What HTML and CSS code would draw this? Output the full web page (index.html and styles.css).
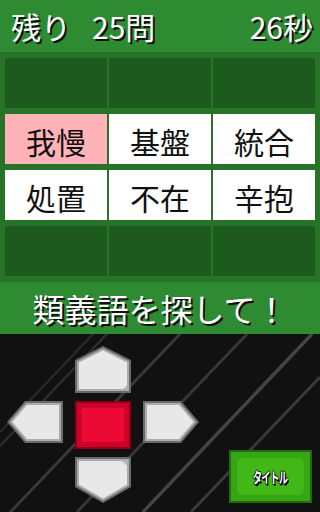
FILE: index.html
```html
<!DOCTYPE html>
<html lang="ja">
<head>
<meta charset="utf-8">
<title>類義語</title>
<link rel="stylesheet" href="styles.css">
</head>
<body>
<div class="app">
  <header class="status">
    <span class="status-label">残り</span>
    <span class="status-count">25問</span>
    <span class="status-time">26秒</span>
  </header>

  <section class="board">
    <div class="cell empty"></div>
    <div class="cell empty"></div>
    <div class="cell empty"></div>
    <div class="cell word selected">我慢</div>
    <div class="cell word">基盤</div>
    <div class="cell word">統合</div>
    <div class="cell word">処置</div>
    <div class="cell word">不在</div>
    <div class="cell word">辛抱</div>
    <div class="cell empty"></div>
    <div class="cell empty"></div>
    <div class="cell empty"></div>
  </section>

  <div class="message">類義語を探して！</div>

  <section class="controls">
    <svg class="stripes" width="320" height="178" viewBox="0 0 320 178" aria-hidden="true">
      <line x1="93" y1="0" x2="0" y2="98" stroke="#282828" stroke-width="2.5"/>
      <line x1="107" y1="0" x2="0" y2="112" stroke="#2e2e2e" stroke-width="2.5"/>
      <line x1="180" y1="0" x2="0" y2="189" stroke="#383838" stroke-width="3"/>
      <line x1="247" y1="0" x2="77" y2="178" stroke="#363636" stroke-width="3"/>
      <line x1="312" y1="0" x2="143" y2="178" stroke="#444444" stroke-width="3.5"/>
      <line x1="320" y1="43" x2="191" y2="178" stroke="#393939" stroke-width="3"/>
    </svg>

    <div class="dpad">
      <div class="pad-blank"></div>
      <svg class="pad pad-up" width="56" height="47" viewBox="0 0 56 47">
        <polygon points="28,0 56,14 56,47 0,47 0,14" fill="#6a6a6a"/>
        <polygon points="28,2.3 54,15.2 54,45 2,45 2,15.2" fill="#acacac"/>
        <polygon points="28,4.6 52,16.4 52,43 4,43 4,16.4" fill="#e8e8e8"/>
        <polygon points="48,43 52,39 52,43" fill="#bdbdbd"/>
      </svg>
      <div class="pad-blank"></div>

      <svg class="pad pad-left" width="56" height="42" viewBox="0 0 56 42">
        <polygon points="0,21 18,0 56,0 56,42 18,42" fill="#6a6a6a"/>
        <polygon points="2.7,21 19,2 54,2 54,40 19,40" fill="#acacac"/>
        <polygon points="5.4,21 20,4 52,4 52,38 20,38" fill="#e8e8e8"/>
      </svg>
      <div class="pad-center"></div>
      <svg class="pad pad-right" width="56" height="42" viewBox="0 0 56 42">
        <polygon points="0,0 38,0 56,21 38,42 0,42" fill="#6a6a6a"/>
        <polygon points="2,2 37,2 53.3,21 37,40 2,40" fill="#acacac"/>
        <polygon points="4,4 36,4 50.6,21 36,38 4,38" fill="#e8e8e8"/>
      </svg>

      <div class="pad-blank"></div>
      <svg class="pad pad-down" width="56" height="46" viewBox="0 0 56 46">
        <polygon points="0,0 56,0 56,30 28,46 0,30" fill="#6a6a6a"/>
        <polygon points="2,2 54,2 54,28.8 28,43.7 2,28.8" fill="#acacac"/>
        <polygon points="4,4 52,4 52,27.6 28,41.4 4,27.6" fill="#e8e8e8"/>
        <polygon points="47,4 52,4 52,9" fill="#bdbdbd"/>
      </svg>
      <div class="pad-blank"></div>
    </div>

    <div class="title-btn"><span class="title-text">タイトル</span></div>
  </section>
</div>
</body>
</html>
```

FILE: styles.css
```css
html, body {
  margin: 0;
  padding: 0;
  background: #111111;
}

.app {
  width: 320px;
  height: 512px;
  overflow: hidden;
  display: flex;
  flex-direction: column;
  font-family: "Noto Sans CJK JP", "Noto Sans", sans-serif;
}

.status {
  height: 52px;
  flex: none;
  display: flex;
  align-items: center;
  padding: 0 7px 0 11px;
  background: #2f8b31;
  color: #ffffff;
  font-size: 30px;
  line-height: 1;
  text-shadow: 2px 2px 0 #111111;
}

.status-count {
  margin-left: 21px;
}

.status-time {
  margin-left: auto;
}

.board {
  flex: none;
  height: 218px;
  padding: 6px 5px;
  background: #277428;
  display: grid;
  grid-template-columns: repeat(3, 102px);
  grid-template-rows: repeat(4, 50px);
  column-gap: 2px;
  row-gap: 6px;
}

.cell {
  display: flex;
  align-items: center;
  justify-content: center;
}

.cell.empty {
  background: #1c5b1d;
}

.cell.word {
  background: #ffffff;
  color: #111111;
  font-size: 30px;
  line-height: 1;
  padding-top: 4px;
  box-sizing: border-box;
}

.cell.word.selected {
  background: #ffb3b8;
}

.message {
  flex: none;
  height: 52px;
  background: #2f8b31;
  color: #ffffff;
  font-size: 32px;
  line-height: 52px;
  text-align: center;
  text-shadow: 2px 2px 0 #111111;
}

.controls {
  position: relative;
  flex: 1;
  background: #111111;
  display: flex;
  justify-content: space-between;
  padding: 12px 8px 19px 7px;
}

.stripes {
  position: absolute;
  left: 0;
  top: 0;
}

.dpad {
  position: relative;
  display: grid;
  grid-template-columns: 56px 56px 56px;
  grid-template-rows: 47px 48px 46px;
  column-gap: 12px;
  row-gap: 8px;
  align-self: flex-start;
}

.pad {
  display: block;
}

.pad-left,
.pad-right {
  align-self: start;
}

.pad-center {
  width: 56px;
  height: 48px;
  background: #ec0a34;
  box-shadow: inset 0 0 0 2px #8e0016, inset 0 0 0 7px #cf0029;
}

.title-btn {
  position: relative;
  align-self: flex-end;
  width: 83px;
  height: 53px;
  box-sizing: border-box;
  border: 2px solid #1f6b0e;
  background: #37a612;
  display: flex;
  align-items: center;
  justify-content: center;
}

.title-btn::before {
  content: "";
  position: absolute;
  left: 6px;
  top: 6px;
  right: 6px;
  bottom: 6px;
  border-radius: 6px;
  background: #42b818;
}

.title-text {
  position: relative;
  display: inline-block;
  color: #ffffff;
  font-size: 15px;
  font-weight: 700;
  line-height: 1;
  transform: scaleX(0.62);
  letter-spacing: -1px;
  text-shadow: 1px 0 0 #000, -1px 0 0 #000, 0 1px 0 #000, 0 -1px 0 #000, 1px 1px 0 #000, 2px 2px 0 #000;
}
```
